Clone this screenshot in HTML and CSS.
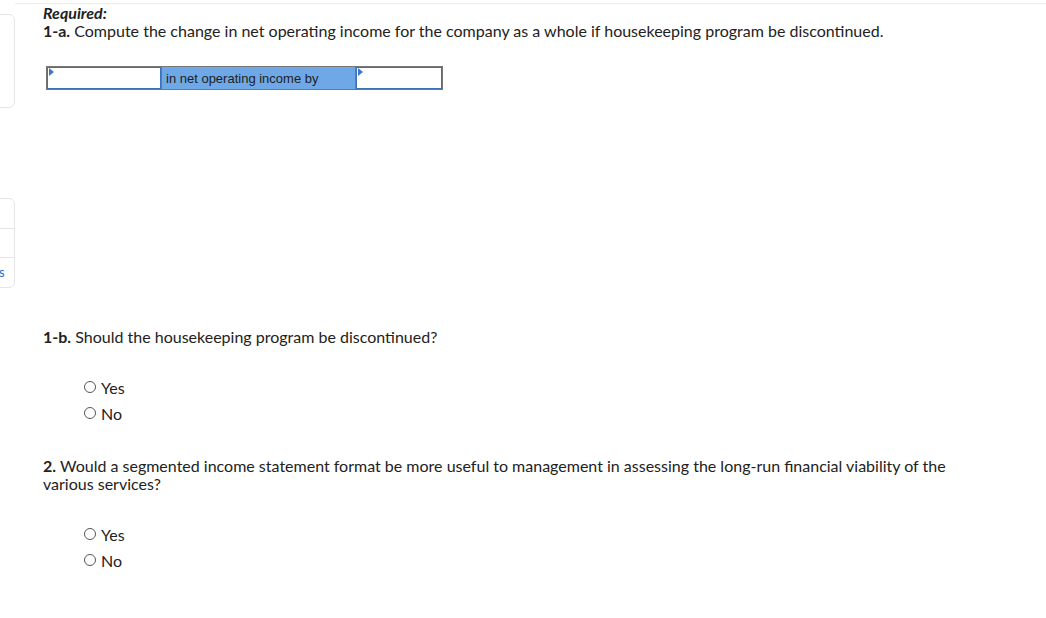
FILE: index.html
```html
<!DOCTYPE html>
<html>
<head>
<meta charset="utf-8">
<link rel="stylesheet" href="styles.css">
</head>
<body>
<div class="page">
  <aside class="side">
    <div class="card card-a"></div>
    <div class="card card-b">
      <div class="row"></div>
      <div class="row"></div>
      <div class="row"><span class="link">s</span></div>
    </div>
  </aside>
  <main class="main">
    <div class="req">Required:</div>
    <p class="q"><b>1-a.</b> Compute the change in net operating income for the company as a whole if housekeeping program be discontinued.</p>
    <table class="ans">
      <tr>
        <td class="inp w1"><span class="flag"></span></td>
        <td class="lbl">in net operating income by</td>
        <td class="inp w3"><span class="flag"></span></td>
      </tr>
    </table>
    <p class="q q1b"><b>1-b.</b> Should the housekeeping program be discontinued?</p>
    <ul class="opts">
      <li><span class="radio"></span>Yes</li>
      <li><span class="radio"></span>No</li>
    </ul>
    <p class="q q2"><b>2.</b> Would a segmented income statement format be more useful to management in assessing the long-run financial viability of the various services?</p>
    <ul class="opts opts2">
      <li><span class="radio"></span>Yes</li>
      <li><span class="radio"></span>No</li>
    </ul>
  </main>
</div>
</body>
</html>
```

FILE: styles.css
```css
html, body {
  margin: 0;
  padding: 0;
  background: #fff;
}
body {
  font-family: Lato, "Open Sans", sans-serif;
  color: #222;
  width: 1046px;
  height: 618px;
  overflow: hidden;
}
.page {
  display: flex;
  height: 618px;
}
.side {
  width: 15px;
  flex: none;
  position: relative;
}
.card {
  margin-left: -10px;
  width: 25px;
  border: 1px solid #e6e6e6;
  border-radius: 0 6px 6px 0;
  box-sizing: border-box;
}
.card-a {
  margin-top: 14px;
  height: 94px;
}
.card-b {
  margin-top: 90px;
  height: 90px;
  display: flex;
  flex-direction: column;
}
.card-b .row {
  flex: 1;
  border-top: 1px solid #e6e6e6;
  position: relative;
}
.card-b .row:first-child { border-top: 0; }
.link {
  position: absolute;
  left: 8px;
  top: 6px;
  font-size: 13px;
  color: #1a6fc9;
}
.main {
  flex: 1;
  padding-left: 28px;
  border-top: 1px solid #ececec;
  margin-top: 3px;
}
.req {
  font-weight: bold;
  font-style: italic;
  font-size: 16px;
  margin-top: 0;
  line-height: 18px;
}
.q {
  margin: 0;
  font-size: 16px;
  line-height: 18px;
  max-width: 908px;
}
.q b { font-weight: bold; }
.ans {
  border-collapse: collapse;
  margin-top: 26px;
  margin-left: 3px;
  border: 1px solid #666;
}
.ans td {
  height: 23px;
  padding: 0;
  border: 1px solid #777;
  font-family: "Liberation Sans", Arial, sans-serif;
  font-size: 13px;
  box-sizing: border-box;
}
.inp {
  position: relative;
  background: #fff;
  box-shadow: inset 0 0 0 1px #3f72b5;
}
.w1 { width: 115px; }
.w3 { width: 87px; }
.lbl {
  background: #6fa8e6;
  width: 194px;
  padding-left: 4px !important;
  color: #1e1e1e;
}
.flag {
  position: absolute;
  left: 2px;
  top: 1px;
  width: 0;
  height: 0;
  border-top: 4px solid transparent;
  border-bottom: 4px solid transparent;
  border-left: 5px solid #3a78c9;
}
.q1b { margin-top: 238px; }
.opts {
  list-style: none;
  margin: 28px 0 0 41px;
  padding: 0;
  font-size: 16px;
}
.opts li {
  display: flex;
  align-items: center;
  height: 26px;
}
.radio {
  width: 12px;
  height: 12px;
  border: 1px solid #555;
  border-radius: 50%;
  margin-right: 5px;
  box-sizing: border-box;
}
.q2 { margin-top: 31px; }
.opts2 { margin-top: 28px; }
```
